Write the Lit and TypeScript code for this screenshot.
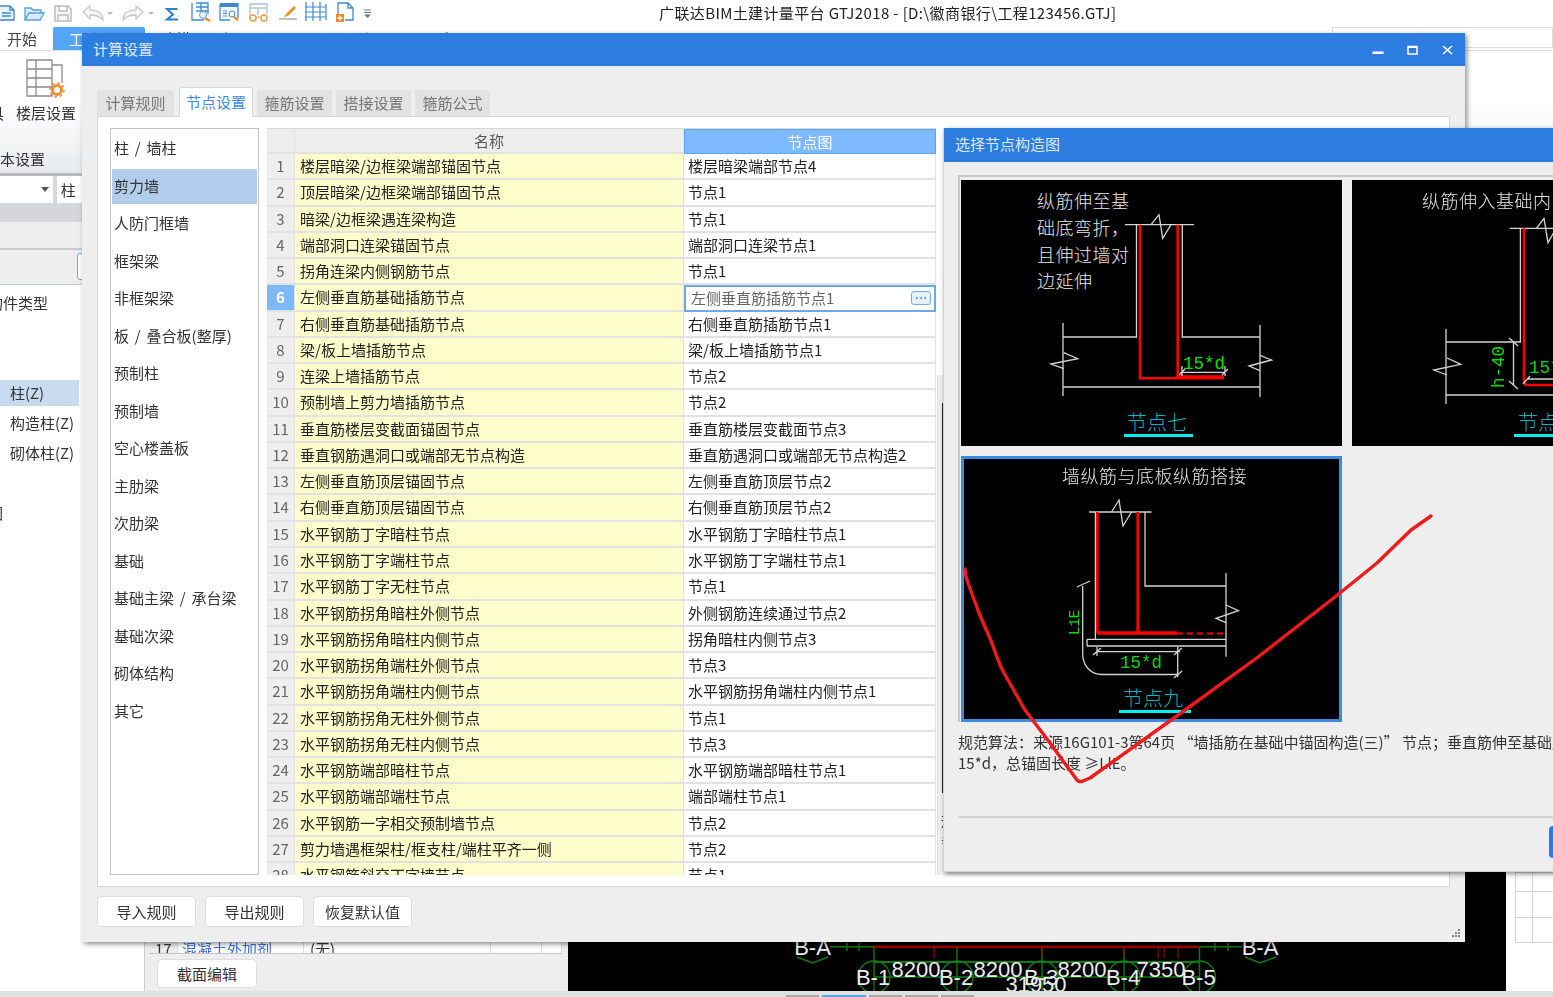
import { LitElement, html, svg, css } from "lit";
import { customElement } from "lit/decorators.js";

const appTitle = "广联达BIM土建计量平台 GTJ2018 - [D:\\徽商银行\\工程123456.GTJ]";
const ribbonTabs = ["开始", "工程设置", "建模", "视图", "工具", "工程量", "云应用"];
const dialogTabs = ["计算规则", "节点设置", "箍筋设置", "搭接设置", "箍筋公式"];
const members = [
  "柱 / 墙柱", "剪力墙", "人防门框墙", "框架梁", "非框架梁", "板 / 叠合板(整厚)", "预制柱", "预制墙",
  "空心楼盖板", "主肋梁", "次肋梁", "基础", "基础主梁 / 承台梁", "基础次梁", "砌体结构", "其它",
];
const rows = [
  ["楼层暗梁/边框梁端部锚固节点", "楼层暗梁端部节点4"],
  ["顶层暗梁/边框梁端部锚固节点", "节点1"],
  ["暗梁/边框梁遇连梁构造", "节点1"],
  ["端部洞口连梁锚固节点", "端部洞口连梁节点1"],
  ["拐角连梁内侧钢筋节点", "节点1"],
  ["左侧垂直筋基础插筋节点", "左侧垂直筋插筋节点1"],
  ["右侧垂直筋基础插筋节点", "右侧垂直筋插筋节点1"],
  ["梁/板上墙插筋节点", "梁/板上墙插筋节点1"],
  ["连梁上墙插筋节点", "节点2"],
  ["预制墙上剪力墙插筋节点", "节点2"],
  ["垂直筋楼层变截面锚固节点", "垂直筋楼层变截面节点3"],
  ["垂直钢筋遇洞口或端部无节点构造", "垂直筋遇洞口或端部无节点构造2"],
  ["左侧垂直筋顶层锚固节点", "左侧垂直筋顶层节点2"],
  ["右侧垂直筋顶层锚固节点", "右侧垂直筋顶层节点2"],
  ["水平钢筋丁字暗柱节点", "水平钢筋丁字暗柱节点1"],
  ["水平钢筋丁字端柱节点", "水平钢筋丁字端柱节点1"],
  ["水平钢筋丁字无柱节点", "节点1"],
  ["水平钢筋拐角暗柱外侧节点", "外侧钢筋连续通过节点2"],
  ["水平钢筋拐角暗柱内侧节点", "拐角暗柱内侧节点3"],
  ["水平钢筋拐角端柱外侧节点", "节点3"],
  ["水平钢筋拐角端柱内侧节点", "水平钢筋拐角端柱内侧节点1"],
  ["水平钢筋拐角无柱外侧节点", "节点1"],
  ["水平钢筋拐角无柱内侧节点", "节点3"],
  ["水平钢筋端部暗柱节点", "水平钢筋端部暗柱节点1"],
  ["水平钢筋端部端柱节点", "端部端柱节点1"],
  ["水平钢筋一字相交预制墙节点", "节点2"],
  ["剪力墙遇框架柱/框支柱/端柱平齐一侧", "节点2"],
  ["水平钢筋斜交丁字墙节点", "节点1"],
];

@customElement("app-root")
export class AppRoot extends LitElement {
  static styles = css`
    :host {
      display: block;
      width: 1553px;
      height: 997px;
      overflow: hidden;
      font: 15px/20px "Noto Sans CJK SC", "Liberation Sans", sans-serif;
      color: #333;
      background: #fff;
    }
    .app {
      position: relative;
      width: 1553px;
      height: 997px;
      overflow: hidden;
      display: flex;
      flex-direction: column;
      filter: blur(0.35px);
    }

    /* main window */
    .titlebar { height: 27px; flex: none; display: flex; overflow: hidden; }
    .titlebar svg { flex: none; }
    .titlebar span { margin: 3px 0 0 279px; white-space: nowrap; color: #222; letter-spacing: 0.38px; }
    .tabsrow { height: 23px; flex: none; display: flex; align-items: stretch; }
    .rtab { padding: 2px 16px 0; white-space: nowrap; color: #444; }
    .rtab:first-child { padding-left: 7px; }
    .rtab.on { background: #55a5f5; color: #fff; border-radius: 2px 2px 0 0; }
    .search { margin: 0 0 2px auto; width: 221px; border: 1px solid #ddd; box-sizing: border-box; }
    .ribbon {
      height: 126px;
      flex: none;
      box-sizing: border-box;
      border-top: 1px solid #ddd;
      border-bottom: 3px solid #b8babc;
      background: linear-gradient(#fff 45%, #e6eaec);
      display: flex;
      flex-direction: column;
    }
    .tools { display: flex; align-items: flex-end; height: 72px; }
    .cutlabel { margin-left: -11px; width: 15px; flex: none; line-height: 20px; }
    .tool { margin-left: 12px; width: 60px; display: flex; flex-direction: column; align-items: center; }
    .tool svg { margin-bottom: 4px; }
    .tool span { white-space: nowrap; }
    .grouplabel { margin: 26px 0 0 -15px; white-space: nowrap; }

    .work { flex: 1; min-height: 0; display: flex; }
    .nav { width: 145px; flex: none; border-right: 1px solid #ccc; box-sizing: border-box; display: flex; flex-direction: column; }
    .combo { height: 29px; flex: none; background: #d8d8d8; display: flex; gap: 4px; padding-bottom: 2px; box-sizing: border-box; }
    .combo div { background: #fff; display: flex; align-items: center; }
    .select { width: 53px; justify-content: flex-end; padding-right: 4px; box-sizing: border-box; }
    .select i { border: 4px solid transparent; border-top: 5px solid #555; border-bottom: 0; }
    .pick { width: 84px; padding-left: 4px; }
    .band { height: 17px; flex: none; background: #d4d6da; }
    .graystrip { height: 28px; flex: none; background: #eee; border-bottom: 2px solid #c8ccd0; box-sizing: border-box; }
    .btnstrip { height: 35px; flex: none; background: #eee; border-bottom: 1px solid #c8ccd4; padding: 3px 0 0 77px; box-sizing: border-box; }
    .btnstrip div { width: 50px; height: 27px; border: 1px solid #6aa8e8; border-radius: 3px; background: #fff; box-sizing: border-box; }
    .tree { flex: 1; background: #fff; display: flex; flex-direction: column; white-space: nowrap; padding-top: 8px; }
    .tree .head { margin-left: -12px; height: 20px; flex: none; }
    .tree .node { height: 30px; margin-left: 10px; line-height: 30px; flex: none; }
    .tree .node.on { width: 69px; margin: 67px 0 2px; padding-left: 10px; line-height: 26px; height: 26px; background: #c8daf0; }
    .cut { margin-left: -12px; height: 20px; flex: none; }
    .cut.a { margin-top: 35px; }
    .cut.b { margin-top: 69px; margin-left: -9px; }
    .cut.c { margin-top: 161px; margin-left: -9px; }

    .props { width: 423px; flex: none; background: #eee; display: flex; flex-direction: column; justify-content: flex-end; }
    .prow { margin-left: 4px; width: 413px; height: 13px; flex: none; background: #fff; border-bottom: 1px solid #c4c4c4; display: flex; overflow: hidden; line-height: 17px; }
    .prow div { border-right: 1px solid #ddd; box-sizing: border-box; flex: none; white-space: nowrap; }
    .prow .n { width: 29px; background: #eee; padding-left: 6px; }
    .prow .k { width: 126px; padding-left: 4px; color: #3a6fe0; }
    .prow .v { width: 187px; padding-left: 6px; }
    .prow .w { width: 51px; }
    .prow .x { width: 20px; }
    .pfoot { height: 37px; flex: none; padding: 5px 0 0 12px; box-sizing: border-box; }
    .pfoot .btn { width: 100px; height: 29px; }
    .cad { flex: 1; background: #000; display: flex; flex-direction: column; justify-content: flex-end; min-width: 0; }
    .cad svg { display: block; }
    .side { width: 47px; flex: none; background: #fff; padding-left: 9px; box-sizing: border-box; display: flex; flex-direction: column; justify-content: flex-end; }
    .minigrid {
      height: 71px;
      margin-bottom: 48px;
      box-sizing: border-box;
      border: 1px solid #d4d4d4;
      border-right: 0;
      background:
        linear-gradient(#d4d4d4, #d4d4d4) 0 18px / 100% 1px no-repeat,
        linear-gradient(#d4d4d4, #d4d4d4) 0 44px / 100% 1px no-repeat,
        linear-gradient(#d4d4d4, #d4d4d4) 16px 0 / 1px 100% no-repeat;
    }
    .status { height: 6px; flex: none; background: #e0e0e0; display: flex; padding-left: 786px; gap: 3px; }
    .status i { width: 33px; height: 2px; margin-top: 4px; background: #a8a8a8; }
    .status i.on { width: 44px; background: #55a5f5; }

    .btn {
      display: flex;
      align-items: center;
      justify-content: center;
      background: #fff;
      border: 1px solid #ddd;
      border-radius: 4px;
      box-sizing: border-box;
      white-space: nowrap;
    }

    /* dialogs float over the main window */
    .dialog {
      position: absolute;
      display: flex;
      flex-direction: column;
      background: #eee;
      box-shadow: 2px 2px 5px rgba(0, 0, 0, 0.45);
      box-sizing: border-box;
    }
    .calc { left: 82px; top: 33px; width: 1383px; height: 909px; }
    .pickd { left: 943px; top: 128px; width: 800px; height: 744px; border-bottom: 1px solid #c8d0dc; border-left: 1px solid #ccd4e0; }
    .dtitle {
      flex: none;
      background: #2d7de0;
      color: #dbe9fb;
      display: flex;
      align-items: center;
      padding-left: 11px;
    }
    .calc .dtitle { height: 33px; padding-bottom: 1px; box-sizing: border-box; }
    .pickd .dtitle { height: 34px; padding: 0 0 3px 11px; box-sizing: border-box; }
    .winbtns { margin-left: auto; display: flex; }
    .winbtns svg { width: 35px; height: 33px; display: block; }

    .dtabs { display: flex; gap: 4px; margin: 24px 0 0 15px; height: 26px; flex: none; align-items: flex-end; }
    .dtab {
      width: 75px;
      height: 26px;
      background: #e2e2e2;
      color: #777;
      border-radius: 3px 3px 0 0;
      text-align: center;
      line-height: 25px;
    }
    .dtab:first-child { width: 77px; margin-right: 1px; }
    .dtab.on { width: 74px; height: 30px; background: #fff; color: #3c8ce0; border: 1px solid #d8d8d8; border-bottom: 0; box-sizing: border-box; position: relative; top: 1px; line-height: 27px; }
    .panel {
      margin-left: 15px;
      width: 1353px;
      height: 771px;
      flex: none;
      box-sizing: border-box;
      background: #fff;
      border: 1px solid #d6d6d6;
      padding: 11px 0 0 12px;
      display: flex;
      gap: 8px;
    }
    .list { width: 149px; height: 747px; flex: none; box-sizing: border-box; border: 1px solid #c4c4c4; padding: 1px; }
    .item { height: 37.5px; box-sizing: border-box; line-height: 34px; padding-left: 2px; white-space: nowrap; word-spacing: 2.5px; border-block: 1px solid transparent; background-clip: padding-box; color: #333; }
    .item.on { background-color: #b2cdec; }
    .table { width: 669px; height: 747px; flex: none; overflow: hidden; border-top: 1px solid #d8d8d8; box-sizing: border-box; }
    .tr { display: grid; grid-template-columns: 28px 389px 252px; height: 26.27px; }
    .tr > div { box-sizing: border-box; border-bottom: 2px solid #e2e2e2; border-right: 1px solid #e2e2e2; white-space: nowrap; overflow: hidden; line-height: 24px; }
    .tr.head { height: 25px; }
    .th { background: #eee; text-align: center; color: #555; }
    .th.on { background: #7db9fb; color: #fff; border: 1px solid #5ea5f0 !important; }
    .num { background: #eee; text-align: center; color: #666; }
    .num.on { background: #7db8f8; color: #fff; font-weight: 700; }
    .name { background: #fdfdcc; padding-left: 5px; color: #222; }
    .val { background: #fff; padding-left: 4px; color: #222; }
    .val.edit {
      border: 2px solid #6ea8e8 !important;
      padding-left: 5px;
      color: #666;
      display: flex;
      align-items: center;
      justify-content: space-between;
      line-height: 20px;
    }
    .more { display: block; margin-right: 3px; flex: none; }
    .rest {
      flex: 1;
      align-self: flex-start;
      height: 500px;
      margin: 247px 0 0 -7px;
      padding: 28px 0 0 3px;
      box-sizing: border-box;
      background: #eee;
      border-left: 1px solid #ddd;
      white-space: nowrap;
      line-height: 20px;
    }
    .thumb { width: 2px; height: 390px; margin: 0 0 17px 1px; background: #222; }
    .footbtns { display: flex; gap: 9px; margin: 9px 0 0 15px; }
    .footbtns .btn { width: 99px; height: 31px; }
    .grip { position: absolute; right: 4px; bottom: 4px; }

    .pane {
      margin: 13px 0 0 14px;
      width: 900px;
      height: 547px;
      flex: none;
      box-sizing: border-box;
      border-top: 2px solid #c8c8c8;
      border-left: 2px solid #c8c8c8;
      padding: 3px 0 0 1px;
      display: grid;
      grid-template-columns: 381px 381px;
      grid-auto-rows: 266px;
      gap: 10px;
    }
    .card { background: #000; display: block; }
    .card.sel { outline: 3px solid #3e8ae0; outline-offset: -3px; }
    .note { margin: 9px 0 0 14px; line-height: 21px; white-space: nowrap; color: #333; flex: none; }
    .rule { margin: 43px 0 0 14px; height: 2px; background: #d4d4d4; flex: none; }
    .okrow { margin: 8px 0 0 605px; flex: none; }
    .okrow div { width: 90px; height: 32px; border-radius: 4px; background: #2d7de0; }

    /* cad drawing strokes */
    .wire { stroke: #d4d4d4; stroke-width: 1.3; fill: none; }
    .rebar { stroke: #f00; stroke-width: 2.6; fill: none; }
    .thick { stroke: #f00; stroke-width: 3.6; fill: none; }
    .dash { stroke: #f00; stroke-width: 2; fill: none; stroke-dasharray: 6 4; }
    .cadtext { fill: #e6e6e6; font-size: 18px; font-weight: 300; letter-spacing: 0.5px; }
    .dimtext { fill: #00e000; font: 17.5px "Liberation Mono", monospace; }
    .dimtext.small { font-size: 14px; }
    .nodename { fill: #00b4c4; font-size: 20px; font-weight: 300; }
    .underline { fill: #00f0f0; }
    .axis { stroke: #0b7d0b; stroke-width: 1.4; fill: none; }
    .axis.heavy { stroke-width: 2.2; }
    .beam { stroke: #a00000; stroke-width: 2.6; fill: none; }
    .beamtick { stroke: #a00000; stroke-width: 1.2; fill: none; }
    .plan { fill: #ececec; font: 22px "Liberation Sans", sans-serif; text-anchor: middle; }
    .scribble { position: absolute; left: 0; top: 0; pointer-events: none; }
    .scribble path { fill: none; stroke: #f01a1a; stroke-width: 3.4; stroke-linecap: round; stroke-linejoin: round; }
  `;

  private quickAccess() {
    return html`<svg width="380" height="27" viewBox="0 0 380 27" fill="none">
      <path d="M-4 6H10L14 10V20H-4ZM10 6V10H14M2 13H11M2 16H11" stroke="#3c8ad0" fill="#eaf3fb" stroke-width="1.3"/>
      <path d="M25 20V8H31L33 10H41V13M25 20L29 13H44L40 20Z" stroke="#5a9fdc" fill="#dcebfa" stroke-width="1.3"/>
      <path d="M55 6H68L71 9V21H55ZM59 6V11H67V6M58 21V15H68V21" stroke="#bdbdbd" fill="#f6f6f6" stroke-width="1.5"/>
      <path d="M83 12L90 6V10C97 10 103 13 103 20C100 16 96 15 90 15V19Z" stroke="#c8c8c8" fill="#f7f7f7" stroke-width="1.3"/>
      <path d="M107 12H113L110 15Z" fill="#bbb"/>
      <path d="M143 12L136 6V10C129 10 123 13 123 20C126 16 130 15 136 15V19Z" stroke="#c8c8c8" fill="#f7f7f7" stroke-width="1.3"/>
      <path d="M148 12H154L151 15Z" fill="#bbb"/>
      <path d="M177.500 9H167L173 14.500L167 19.500H178" stroke="#2b7fc9" stroke-width="2"/>
      <path d="M192 3V20H204M196 3H208V14M196 7H208M196 11H208M201 3V11" stroke="#3c8ad0" stroke-width="1.3"/>
      <circle cx="203" cy="15" r="3.500" stroke="#5a9fdc" fill="#eaf3fb"/>
      <path d="M205 18L210 21" stroke="#ee8a20" stroke-width="2.500"/>
      <path d="M220 4H238V18M220 4V20H230" stroke="#3c8ad0" stroke-width="1.300"/>
      <rect x="220" y="3" width="18" height="4" fill="#3c8ad0"/>
      <path d="M223 11H227M223 13.500H227M223 16H227" stroke="#3c8ad0"/>
      <circle cx="232" cy="14" r="3" stroke="#3c8ad0"/>
      <path d="M234 17L238 20" stroke="#ee8a20" stroke-width="2.500"/>
      <path d="M250 4H267V14M250 4V16M250 8H267M258 8V15" stroke="#a8c4dc" stroke-width="1.300"/>
      <circle cx="253" cy="18" r="3" stroke="#ee9a40" stroke-width="1.400"/>
      <circle cx="264" cy="18" r="3" stroke="#ee9a40" stroke-width="1.400"/>
      <path d="M256 17H261" stroke="#ee9a40"/>
      <path d="M286 14L294 6L296 8L288 16Z" fill="#f08a2c"/>
      <path d="M284 17L286 14L288 16Z" fill="#f08a2c"/>
      <path d="M279 19H297" stroke="#aaa" stroke-width="1.500"/>
      <path d="M306 2V21M313 2V21M320 2V21M305 7H326M305 12H326M305 17H326M326 4V20" stroke="#3c8ad0" stroke-width="1.200"/>
      <path d="M338 14V3H348L353 8V20H345M348 3V8H353" stroke="#3c8ad0" stroke-width="1.300"/>
      <rect x="336" y="14" width="8" height="8" fill="#f08a2c"/>
      <path d="M340 15.500V20.500M337.500 18H342.500" stroke="#fff" stroke-width="1.300"/>
      <path d="M364 10H371M364 12.500H371" stroke="#777"/>
      <path d="M364 14.500H371L367.500 18Z" fill="#777"/>
    </svg>`;
  }

  private drawingOne() {
    return html`<svg class="card" width="381" height="266" viewBox="0 0 381 266">
      <text class="cadtext" x="76" y="28">纵筋伸至基</text>
      <text class="cadtext" x="76" y="55">础底弯折，</text>
      <text class="cadtext" x="76" y="82">且伸过墙对</text>
      <text class="cadtext" x="76" y="108">边延伸</text>
      <path class="wire" d="M164 44.700H233M175.500 44.700V157H102M221.300 44.700V157H299M102 143V216M299 145V217M102 207H299"/>
      <path class="wire" d="M190 44.700L198 34.700L201.700 58.300L210 44.700M102.800 172.700L116.700 178.700L89.800 184L102.800 188.700M299 175.300L310.500 180L288 186L299 190.700"/>
      <path class="rebar" d="M179 44.700V198.300H263M216.700 44.700V197"/>
      <path class="thick" d="M217 197H263"/>
      <path class="wire" d="M221 192.300H264M221 186V196M264 186V196M218 195L224 189M261 195L267 189"/>
      <text class="dimtext" x="222" y="189">15*d</text>
      <text class="nodename" x="166" y="250">节点七</text>
      <rect class="underline" x="163" y="254" width="69" height="3"/>
    </svg>`;
  }

  private drawingTwo() {
    return html`<svg class="card" width="381" height="266" viewBox="0 0 381 266">
      <text class="cadtext" x="70" y="28">纵筋伸入基础内</text>
      <path class="wire" d="M157.600 48.300H300M168.400 48.300V162H94M94 149V224M94 215H300"/>
      <path class="wire" d="M184.500 48.300L192 38.300L196 62.700L204 48.300M95 178L108.800 184.300L81.800 190L95 195"/>
      <path class="rebar" d="M172 48.300V202Q172 205 176 205H260"/>
      <path class="wire" d="M161.500 162V205M157 158L166 166M157 201L166 209M176 199H260M171 204L178 196"/>
      <text class="dimtext" transform="translate(152 208) rotate(-90)">h-40</text>
      <text class="dimtext" x="177" y="193">15*d</text>
      <text class="nodename" x="166" y="250">节点八</text>
      <rect class="underline" x="162" y="254" width="69" height="3"/>
    </svg>`;
  }

  private drawingThree() {
    return html`<svg class="card sel" width="381" height="266" viewBox="0 0 381 266">
      <text class="cadtext" x="101" y="27">墙纵筋与底板纵筋搭接</text>
      <path class="wire" d="M128 56H190.500M134.400 56V183M184 56V130H265M265 117V200.700M126 183.300H265M126 190H265M126 183.300V190"/>
      <path class="wire" d="M150.500 56L158 44L162 70L170.500 56M265 149L277.500 154.700L255 162.300L265 166.700"/>
      <path class="rebar" d="M136.300 56V177.300M176.700 56V176"/>
      <path class="thick" d="M136.300 177H216"/>
      <path class="dash" d="M216 177.500H265"/>
      <path class="wire" d="M121.700 130V198C121.700 210 130 218.500 141 218.500H217M116 131L129 125M136 195.700H219M136 191V200M216.700 191V221M132 199L140 192M213 199L221 192M213 222L221 215"/>
      <text class="dimtext small" transform="translate(118 179) rotate(-90)">L1E</text>
      <text class="dimtext" x="159" y="212">15*d</text>
      <text class="nodename" x="162" y="250">节点九</text>
      <rect class="underline" x="158" y="254" width="72" height="3"/>
    </svg>`;
  }

  private planDrawing() {
    const axes = [306, 389, 474, 556, 631.5];
    const labels = ["B-1", "B-2", "B-3", "B-4", "B-5"];
    const spans: [string, number][] = [["8200", 348], ["8200", 430], ["8200", 514], ["7350", 593]];
    return html`<svg width="938" height="49" viewBox="0 0 938 49">
      <path class="axis" d="M262 4.700H674M279 1V9M291 1V9M647 1V9M660 1V9"/>
      <path class="axis heavy" d="M306 20H631.500"/>
      <path class="axis" d="M306 35H631.500"/>
      ${axes.map((x) => svg`<path class="axis" d=${`M${x} 5V49`}/><circle class="axis" cx=${x} cy="35" r="16"/>`)}
      <path class="beam" d="M306 4.700H631.500"/>
      <path class="beamtick" d="M366 5V16M474 5V14M556 5V14M590 5V16M596 5V16M610 5V16"/>
      <path class="axis" d="M229 15L244.500 21L260 15"/>
      <path class="axis" d="M677 15L692 21L708 15"/>
      <text class="plan" x="244.500" y="13">B-A</text>
      <text class="plan" x="692" y="13">B-A</text>
      ${labels.map((t, i) => svg`<text class="plan" x=${axes[i] - 1} y="43">${t}</text>`)}
      ${spans.map(([t, x]) => svg`<text class="plan" x=${x} y="35">${t}</text>`)}
      <text class="plan" x="468" y="50">31950</text>
    </svg>`;
  }

  render() {
    return html`<div class="app">
      <div class="titlebar">
        ${this.quickAccess()}
        <span>${appTitle}</span>
      </div>
      <div class="tabsrow">
        ${ribbonTabs.map((t, i) => html`<div class="rtab ${i === 1 ? "on" : ""}">${t}</div>`)}
        <div class="search"></div>
      </div>
      <div class="ribbon">
        <div class="tools">
          <span class="cutlabel">具</span>
          <div class="tool">
            <svg width="40" height="40" viewBox="0 0 40 40" fill="none">
              <path d="M1 1H26V37H1ZM1 10H26M1 19H26M1 28H26M10 1V37M26 6H36V24" stroke="#8a8a8a" stroke-width="1.300"/>
              <circle cx="31" cy="31" r="4.500" stroke="#f09030" stroke-width="3"/>
              <circle cx="31" cy="31" r="7" stroke="#f09030" stroke-width="1.500" stroke-dasharray="2.500 3"/>
            </svg>
            <span>楼层设置</span>
          </div>
        </div>
        <div class="grouplabel">基本设置</div>
      </div>
      <div class="work">
        <div class="nav">
          <div class="combo">
            <div class="select"><i></i></div>
            <div class="pick">柱</div>
          </div>
          <div class="band"></div>
          <div class="graystrip"></div>
          <div class="btnstrip"><div></div></div>
          <div class="tree">
            <div class="head">构件类型</div>
            <div class="node on">柱(Z)</div>
            <div class="node">构造柱(Z)</div>
            <div class="node">砌体柱(Z)</div>
            <div class="cut a">圈</div>
            <div class="cut b">C</div>
            <div class="cut c">C</div>
          </div>
        </div>
        <div class="props">
          <div class="prow">
            <div class="n">17</div>
            <div class="k">混凝土外加剂</div>
            <div class="v">(无)</div>
            <div class="w"></div>
            <div class="x"></div>
          </div>
          <div class="pfoot"><div class="btn">截面编辑</div></div>
        </div>
        <div class="cad">${this.planDrawing()}</div>
        <div class="side"><div class="minigrid"></div></div>
      </div>
      <div class="status"><i></i><i class="on"></i><i></i><i></i><i></i></div>

      <div class="dialog calc">
        <div class="dtitle">
          计算设置
          <div class="winbtns">
            <svg viewBox="0 0 35 33"><rect x="12.500" y="18.500" width="11" height="2.500" fill="#fff"/></svg>
            <svg viewBox="0 0 35 33"><rect x="13" y="13.500" width="9" height="7.500" fill="none" stroke="#fff" stroke-width="1.500"/><rect x="13" y="13" width="9" height="2" fill="#fff"/></svg>
            <svg viewBox="0 0 35 33"><path d="M13 13L22 21M22 13L13 21" stroke="#fff" stroke-width="1.600"/></svg>
          </div>
        </div>
        <div class="dtabs">
          ${dialogTabs.map((t, i) => html`<div class="dtab ${i === 1 ? "on" : ""}">${t}</div>`)}
        </div>
        <div class="panel">
          <div class="list">
            ${members.map((m, i) => html`<div class="item ${i === 1 ? "on" : ""}">${m}</div>`)}
          </div>
          <div class="table">
            <div class="tr head">
              <div class="th"></div>
              <div class="th">名称</div>
              <div class="th on">节点图</div>
            </div>
            ${rows.map(
              ([name, value], i) => html`<div class="tr">
                <div class="num ${i === 5 ? "on" : ""}">${i + 1}</div>
                <div class="name">${name}</div>
                ${i === 5
                  ? html`<div class="val edit">
                      ${value}
                      <svg class="more" width="20" height="14" viewBox="0 0 20 14">
                        <rect x="0.500" y="0.500" width="19" height="13" rx="2.500" fill="#e6f0fb" stroke="#7aa8e0"/>
                        <path d="M5 7H6.500M9.300 7H10.800M13.500 7H15" stroke="#5a8fd0" stroke-width="2"/>
                      </svg>
                    </div>`
                  : html`<div class="val">${value}</div>`}
              </div>`
            )}
          </div>
          <div class="rest"><div class="thumb"></div><div>规范算法</div><div>垂直筋</div></div>
        </div>
        <div class="footbtns">
          <div class="btn">导入规则</div>
          <div class="btn">导出规则</div>
          <div class="btn">恢复默认值</div>
        </div>
        <svg class="grip" width="10" height="10" viewBox="0 0 10 10">
          <path d="M7 1H9V3H7ZM4 4H6V6H4ZM7 4H9V6H7ZM1 7H3V9H1ZM4 7H6V9H4ZM7 7H9V9H7Z" fill="#888"/>
        </svg>
      </div>

      <div class="dialog pickd">
        <div class="dtitle">选择节点构造图</div>
        <div class="pane">
          ${this.drawingOne()} ${this.drawingTwo()} ${this.drawingThree()}
        </div>
        <div class="note">
          规范算法：来源16G101-3第64页 “墙插筋在基础中锚固构造(三)” 节点；垂直筋伸至基础底部，弯折<br />15*d，总锚固长度 ≥LlE。
        </div>
        <div class="rule"></div>
        <div class="okrow"><div></div></div>
      </div>

      <svg class="scribble" width="1553" height="997" viewBox="0 0 1553 997">
        <path d="M965 569C965 575 966 578 968 583L979 613L992 643C996 655 999 664 1004 673L1025 710L1050 743L1077 780C1079 782 1081 782 1083 781L1090 778L1181 713L1258 657L1335 597L1377 563L1411 530L1431 516"/>
      </svg>
    </div>`;
  }
}
